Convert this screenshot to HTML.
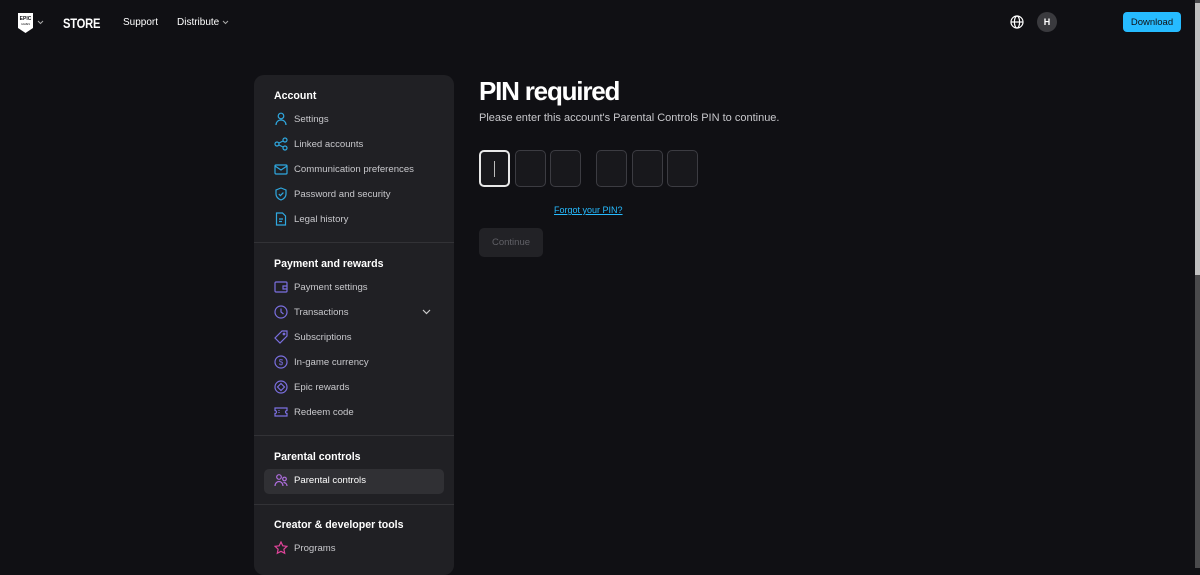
<!DOCTYPE html>
<html><head><meta charset="utf-8">
<style>
*{margin:0;padding:0;box-sizing:border-box}
body{width:1200px;height:568px;overflow:hidden;background:#101014;font-family:"Liberation Sans",sans-serif;color:#fff;position:relative}
.a{position:absolute}
.nav{font-size:10px;color:#fff}
.side{left:254px;top:75px;width:200px;height:500px;background:#202024;border-radius:10px}
.h{position:absolute;left:20px;font-size:10.6px;font-weight:bold;color:#fff}
.it{position:absolute;left:20px;font-size:9.6px;color:#c8c8cc;height:16px;line-height:16px;white-space:nowrap}
.it svg{position:absolute;left:0;top:0}
.it span{position:absolute;left:20px}
.sep{position:absolute;left:0;width:200px;height:1px;background:#323236}
.box{position:absolute;top:150px;width:31px;height:37px;border:1px solid #3c3c42;border-radius:5px;background:#18181c}
</style></head><body>
<svg class="a" style="left:17px;top:13px" width="17" height="20" viewBox="0 0 17 20"><path d="M1 0h15v15l-7.5 5L1 15z" fill="#fff"/><text x="8.5" y="7" font-size="5" font-weight="bold" text-anchor="middle" fill="#101014" font-family="Liberation Sans">EPIC</text><text x="8.5" y="12" font-size="2.5" text-anchor="middle" fill="#101014" font-family="Liberation Sans">GAMES</text></svg>
<svg class="a" style="left:37px;top:20px" width="7" height="5" viewBox="0 0 7 5"><path d="M1 1l2.5 2.5L6 1" stroke="#aaa" fill="none"/></svg>
<div class="a" style="left:63px;top:15px;font-size:14px;font-weight:bold;letter-spacing:-0.3px;transform:scaleX(.8);transform-origin:left">STORE</div>
<div class="a nav" style="left:123px;top:17px">Support</div>
<div class="a nav" style="left:177px;top:17px">Distribute</div>
<svg class="a" style="left:222px;top:20px" width="7" height="5" viewBox="0 0 7 5"><path d="M1 1l2.5 2.5L6 1" stroke="#aaa" fill="none"/></svg>
<svg class="a" style="left:1010px;top:15px" width="14" height="14" viewBox="0 0 14 14" fill="none" stroke="#fff" stroke-width="1.2"><circle cx="7" cy="7" r="6"/><ellipse cx="7" cy="7" rx="2.6" ry="6"/><path d="M1 7h12"/></svg>
<div class="a" style="left:1037px;top:12px;width:20px;height:20px;border-radius:50%;background:#3a3a3e;font-size:9px;font-weight:bold;display:flex;align-items:center;justify-content:center">H</div>
<div class="a" style="left:1123px;top:12px;width:58px;height:20px;border-radius:4px;background:#26bbff;color:#101014;font-size:9.5px;display:flex;align-items:center;justify-content:center">Download</div>
<div class="a" style="left:1195px;top:0;width:5px;height:568px;background:#4a4a4c"></div>
<div class="a" style="left:1195px;top:3px;width:5px;height:272px;background:#c1c1c1"></div>

<div class="a side">
<div class="h" style="top:15px">Account</div>
<div class="it" style="top:37px"><svg width="14" height="14" viewBox="0 0 14 14" fill="none" stroke="#2fa8e0" stroke-width="1.2"><circle cx="7" cy="4" r="2.8"/><path d="M2 13c0-3 2.2-5 5-5s5 2 5 5"/></svg><span>Settings</span></div>
<div class="it" style="top:62px"><svg width="14" height="14" viewBox="0 0 14 14" fill="none" stroke="#2fa8e0" stroke-width="1.2"><circle cx="3" cy="7" r="2"/><circle cx="11" cy="3" r="2"/><circle cx="11" cy="11" r="2"/><path d="M5 6l4-2M5 8l4 2"/></svg><span>Linked accounts</span></div>
<div class="it" style="top:87px"><svg width="14" height="14" viewBox="0 0 14 14" fill="none" stroke="#2fa8e0" stroke-width="1.2"><rect x="1" y="3" width="12" height="9" rx="1"/><path d="M1 4l6 4 6-4"/></svg><span>Communication preferences</span></div>
<div class="it" style="top:112px"><svg width="14" height="14" viewBox="0 0 14 14" fill="none" stroke="#2fa8e0" stroke-width="1.2"><path d="M7 1l5 2v4c0 3-2.5 5-5 6-2.5-1-5-3-5-6V3z"/><path d="M4.8 7l1.6 1.6L9.4 5.6"/></svg><span>Password and security</span></div>
<div class="it" style="top:137px"><svg width="14" height="14" viewBox="0 0 14 14" fill="none" stroke="#2fa8e0" stroke-width="1.2"><path d="M2.5 1h6l3 3v9h-9z"/><path d="M5 7h4M5 9.5h3"/></svg><span>Legal history</span></div>
<div class="sep" style="top:167px"></div>
<div class="h" style="top:183px">Payment and rewards</div>
<div class="it" style="top:205px"><svg width="14" height="14" viewBox="0 0 14 14" fill="none" stroke="#7b6fe0" stroke-width="1.2"><rect x="1" y="2" width="12" height="10" rx="1"/><path d="M13 6H9v3h4"/></svg><span>Payment settings</span></div>
<div class="it" style="top:230px;width:160px"><svg width="14" height="14" viewBox="0 0 14 14" fill="none" stroke="#7b6fe0" stroke-width="1.2"><circle cx="7" cy="7" r="6"/><path d="M7 3.5V7l2.5 2"/></svg><span>Transactions</span><svg style="left:148px;top:4px" width="9" height="6" viewBox="0 0 9 6"><path d="M1 1l3.5 3.5L8 1" stroke="#ccc" fill="none" stroke-width="1.2"/></svg></div>
<div class="it" style="top:255px"><svg width="14" height="14" viewBox="0 0 14 14" fill="none" stroke="#7b6fe0" stroke-width="1.2"><path d="M8 1h5v5l-7 7-5-5z"/><circle cx="10" cy="4" r="0.8"/></svg><span>Subscriptions</span></div>
<div class="it" style="top:280px"><svg width="14" height="14" viewBox="0 0 14 14" fill="none" stroke="#7b6fe0" stroke-width="1.2"><circle cx="7" cy="7" r="6"/><text x="7" y="10" font-size="8" text-anchor="middle" fill="#7b6fe0" stroke="none" font-family="Liberation Sans">$</text></svg><span>In-game currency</span></div>
<div class="it" style="top:305px"><svg width="14" height="14" viewBox="0 0 14 14" fill="none" stroke="#7b6fe0" stroke-width="1.2"><circle cx="7" cy="7" r="6"/><path d="M7 3.5l3.5 3.5L7 10.5 3.5 7z"/></svg><span>Epic rewards</span></div>
<div class="it" style="top:330px"><svg width="14" height="14" viewBox="0 0 14 14" fill="none" stroke="#7b6fe0" stroke-width="1.2"><path d="M1 3h12v2.5a1.5 1.5 0 000 3V11H1V8.5a1.5 1.5 0 000-3z"/><path d="M5 5v4" stroke-dasharray="1 1"/></svg><span>Redeem code</span></div>
<div class="sep" style="top:360px"></div>
<div class="h" style="top:376px">Parental controls</div>
<div class="a" style="left:10px;top:394px;width:180px;height:25px;background:#303034;border-radius:5px"></div>
<div class="it" style="top:398px;color:#fff"><svg width="14" height="14" viewBox="0 0 14 14" fill="none" stroke="#b06fe0" stroke-width="1.2"><circle cx="5" cy="4" r="2.3"/><path d="M1 13c0-2.5 1.8-4.5 4-4.5s4 2 4 4.5"/><circle cx="10.5" cy="6" r="1.8"/><path d="M9.5 9.5c2 0 3.5 1.5 3.5 3.5"/></svg><span>Parental controls</span></div>
<div class="sep" style="top:429px"></div>
<div class="h" style="top:444px">Creator &amp; developer tools</div>
<div class="it" style="top:466px"><svg width="14" height="14" viewBox="0 0 14 14" fill="none" stroke="#e0449a" stroke-width="1.2"><path d="M7 1l1.8 3.8 4.2.5-3.1 2.9.8 4.1L7 10.3 3.3 12.3l.8-4.1L1 5.3l4.2-.5z"/></svg><span>Programs</span></div>
</div>

<div class="a" style="left:479px;top:76px;font-size:26px;font-weight:bold;letter-spacing:-1.2px">PIN required</div>
<div class="a" style="left:479px;top:112px;font-size:11px;color:#c8c8cc">Please enter this account's Parental Controls PIN to continue.</div>
<div class="box" style="left:479px;border:2px solid #e8e8e8"><div class="a" style="left:13px;top:9px;width:1px;height:16px;background:#bbb"></div></div>
<div class="box" style="left:515px"></div>
<div class="box" style="left:550px"></div>
<div class="box" style="left:596px"></div>
<div class="box" style="left:632px"></div>
<div class="box" style="left:667px"></div>
<div class="a" style="left:554px;top:205px;font-size:9px;color:#26bbff;text-decoration:underline">Forgot your PIN?</div>
<div class="a" style="left:479px;top:228px;width:64px;height:29px;border-radius:5px;background:#222226;color:#606066;font-size:9.5px;display:flex;align-items:center;justify-content:center">Continue</div>
</body></html>
